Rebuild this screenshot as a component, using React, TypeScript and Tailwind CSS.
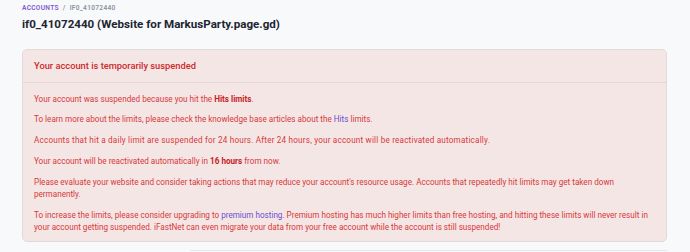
import React from "react";

export default function App() {
  const font = { fontFamily: "Roboto, 'Liberation Sans', sans-serif" };
  return (
    <div className="w-[690px] h-[252px] bg-[#f8f9fb] overflow-hidden" style={font}>
      <div className="pl-[22px] pr-[23px] pt-[4px]">
        <div className="flex items-center gap-[4px] text-[6.6px] font-semibold tracking-[0.3px] leading-[9px] uppercase">
          <span className="text-[#7b5bd1]">Accounts</span>
          <span className="text-[#8a929c]">/</span>
          <span className="text-[#8a929c]">IF0_41072440</span>
        </div>
        <h1 className="mt-[3px] text-[11.6px] leading-[16px] font-bold text-[#1d2532]">
          if0_41072440 (Website for MarkusParty.page.gd)
        </h1>
        <div className="mt-[17px] rounded-[5px] border border-[#e4d9d9] bg-[#f5e6e6] text-[#d63939]">
          <div className="h-[33px] flex items-center px-[11px] border-b border-[#e6d6d6] text-[9.3px] font-medium text-[#cc2a2a]">
            Your account is temporarily suspended
          </div>
          <div className="pl-[11px] pr-[2px] pt-[9.5px] pb-[8px] text-[8.15px] leading-[12.25px]">
            <p className="mb-[8.5px]">
              Your account was suspended because you hit the <b className="font-bold text-[#c41e1e]">Hits limits</b>.
            </p>
            <p className="mb-[8.5px]">
              To learn more about the limits, please check the knowledge base articles about the{" "}
              <span className="text-[#6a4fd0]">Hits</span> limits.
            </p>
            <p className="mb-[8.5px] tracking-[0.2px]">
              Accounts that hit a daily limit are suspended for 24 hours. After 24 hours, your account will be reactivated automatically.
            </p>
            <p className="mb-[8.5px]">
              Your account will be reactivated automatically in <b className="font-bold text-[#c41e1e]">16 hours</b> from now.
            </p>
            <p className="mb-[8.5px]">
              Please evaluate your website and consider taking actions that may reduce your account's resource usage. Accounts that repeatedly hit limits may get taken down
              <br />
              permanently.
            </p>
            <p>
              To increase the limits, please consider upgrading to <span className="text-[#6a4fd0]">premium hosting</span>. Premium hosting has much higher limits than free hosting, and hitting these limits will never result in
              <br />
              your account getting suspended. iFastNet can even migrate your data from your free account while the account is still suspended!
            </p>
          </div>
        </div>
        <div className="mt-[8px] ml-[168px] border-t border-[#e5e7eb]" />
      </div>
    </div>
  );
}
